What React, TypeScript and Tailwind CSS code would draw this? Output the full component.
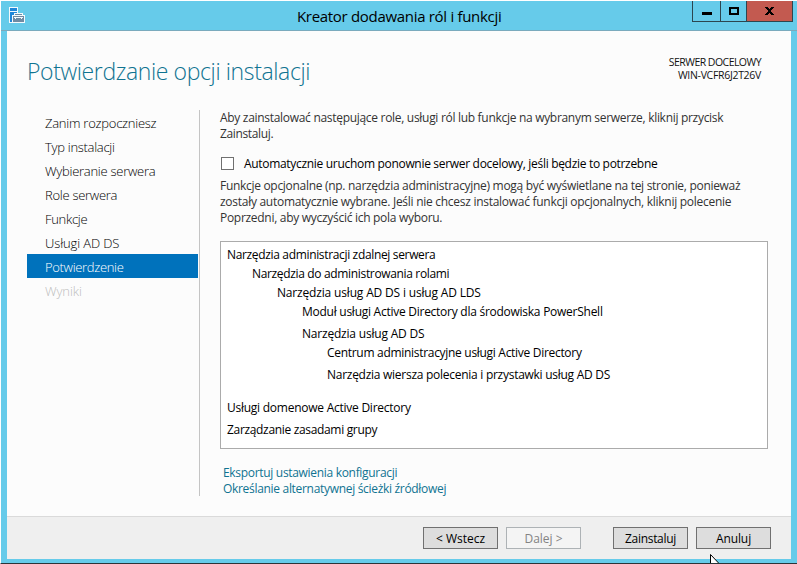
import React from "react";

const steps = [
  { label: "Zanim rozpoczniesz", tracking: "tracking-[-0.25px]" },
  { label: "Typ instalacji", tracking: "tracking-[-0.29px]" },
  { label: "Wybieranie serwera", tracking: "tracking-[-0.27px]" },
  { label: "Role serwera", tracking: "tracking-[-0.28px]" },
  { label: "Funkcje", tracking: "tracking-[-0.3px]" },
  { label: "Usługi AD DS", tracking: "tracking-[-0.12px]" },
  { label: "Potwierdzenie", tracking: "tracking-[-0.33px]" },
  { label: "Wyniki", tracking: "tracking-[-0.1px]" },
];

const features = [
  { label: "Narzędzia administracji zdalnej serwera", style: "pl-0 h-[19px] tracking-[-0.34px]" },
  { label: "Narzędzia do administrowania rolami", style: "pl-[25px] h-[19px] tracking-[-0.34px]" },
  { label: "Narzędzia usług AD DS i usług AD LDS", style: "pl-[50px] h-[19px] tracking-[-0.17px]" },
  { label: "Moduł usługi Active Directory dla środowiska PowerShell", style: "pl-[75px] h-[22px] tracking-[-0.26px]" },
  { label: "Narzędzia usług AD DS", style: "pl-[75px] h-[19px] tracking-[-0.2px]" },
  { label: "Centrum administracyjne usługi Active Directory", style: "pl-[100px] h-[22px] tracking-[-0.3px]" },
  { label: "Narzędzia wiersza polecenia i przystawki usług AD DS", style: "pl-[100px] h-[33px] tracking-[-0.27px]" },
  { label: "Usługi domenowe Active Directory", style: "pl-0 h-[22px] tracking-[-0.25px]" },
  { label: "Zarządzanie zasadami grupy", style: "pl-0 h-[19px] tracking-[-0.33px]" },
];

function ServerIcon() {
  return (
    <svg width="17" height="17" viewBox="0 0 17 17" shapeRendering="crispEdges">
      <path d="M0 0h9v6h5v2h2v8H0z" fill="#f4fafd" />
      <path d="M1 1h7v3H1zM1 5h7v1H5v2H3v7H1z" fill="#1f86d8" />
      <path d="M4 9h11v6H4z" fill="#6f8ba3" />
      <path d="M6 7h7v1h-7z" fill="#6f8ba3" />
      <path d="M5 10h9v1H5z" fill="#f4fafd" />
      <path d="M6 11h1v1H6zM12 11h1v1h-1z" fill="#f4fafd" />
    </svg>
  );
}

function TitleBar() {
  return (
    <header className="relative flex h-[30px] shrink-0 justify-between border-b border-[#7aaabd]">
      <div className="pt-1.5 pl-2">
        <ServerIcon />
      </div>
      <h1 className="absolute top-[5px] left-[296px] text-[15px] leading-5 tracking-[-0.31px] whitespace-nowrap text-black">
        Kreator dodawania ról i funkcji
      </h1>
      <div className="mr-1 flex h-[21px] border border-t-0 border-[#2c4650]">
        <button className="flex w-7 items-center justify-center border-r border-[#2c4650]">
          <span className="mt-1 h-[3px] w-2.5 bg-black" />
        </button>
        <button className="flex w-[26px] items-center justify-center border-r border-[#2c4650]">
          <span className="h-2 w-2.5 border-2 border-black" />
        </button>
        <button className="flex w-[45px] items-center justify-center bg-[#c35a50]">
          <svg width="9" height="8" viewBox="0 0 9 8" shapeRendering="crispEdges">
            <path d="M0 0h3v1h1v1h1V1h1V0h3v1H8v1H7v1H6v2h1v1h1v1h1v1H6V7H5V6H4v1H3v1H0V7h1V6h1V5h1V3H2V2H1V1H0z" fill="#000" />
          </svg>
        </button>
      </div>
    </header>
  );
}

function WizardButton({ children, disabled, className = "" }: { children: string; disabled?: boolean; className?: string }) {
  return (
    <button
      disabled={disabled}
      className={`h-[22px] w-[75px] border text-center text-xs leading-[21px] ${
        disabled ? "border-[#adb2b5] bg-[#f4f4f4] text-[#838383]" : "border-[#707070] bg-[#dddddd] text-black"
      } ${className}`}
    >
      {children}
    </button>
  );
}

export default function App() {
  return (
    <div className="relative flex h-[564px] w-[797px] flex-col overflow-hidden border-t border-b border-l border-t-white border-b-[#2b3438] border-l-white bg-[#66cbea] font-['Open_Sans','Noto_Sans',sans-serif] text-xs text-black">
      <TitleBar />
      <main className="mr-1.5 ml-1.5 flex h-[528px] flex-col bg-[#fcfcfc]">
        <div className="flex h-[79px] justify-between pr-[30px] pl-5">
          <h2 className="pt-6 text-[23px] leading-8 font-light tracking-[-0.38px] whitespace-nowrap text-[#0f7391]">
            Potwierdzanie opcji instalacji
          </h2>
          <div className="pt-[25px] text-right text-[10.5px] leading-[13px] text-[#111]">
            <p className="tracking-[-0.54px]">SERWER DOCELOWY</p>
            <p className="tracking-[-0.3px]">WIN-VCFR6J2T26V</p>
          </div>
        </div>
        <div className="flex h-[406px] pl-5">
          <nav className="h-[386px] w-[173px] border-r border-[#c4c4c4] text-[13px] font-light text-black">
            {steps.map((s, i) => (
              <div
                key={s.label}
                className={`h-6 w-[171px] pt-0.5 pl-[18px] leading-[22px] whitespace-nowrap ${s.tracking} ${
                  i === 6 ? "bg-[#0072bc] text-white" : i === 7 ? "text-[#bcbcbc]" : ""
                }`}
              >
                {s.label}
              </div>
            ))}
          </nav>
          <section className="flex flex-col pl-5 whitespace-nowrap">
            <div className="leading-4 tracking-[-0.3px] text-[#333]">
              <p>Aby zainstalować następujące role, usługi ról lub funkcje na wybranym serwerze, kliknij przycisk</p>
              <p className="tracking-[-0.36px]">Zainstaluj.</p>
            </div>
            <label className="mt-[15px] flex h-[21px] items-start pl-px">
              <span className="h-[13px] w-[13px] border border-[#707070] bg-white" />
              <span className="-mt-px pl-2.5 leading-4 tracking-[-0.31px]">
                Automatycznie uruchom ponownie serwer docelowy, jeśli będzie to potrzebne
              </span>
            </label>
            <div className="leading-4 text-[#333]">
              <p className="tracking-[-0.3px]">Funkcje opcjonalne (np. narzędzia administracyjne) mogą być wyświetlane na tej stronie, ponieważ</p>
              <p className="tracking-[-0.275px]">zostały automatycznie wybrane. Jeśli nie chcesz instalować funkcji opcjonalnych, kliknij polecenie</p>
              <p className="tracking-[-0.29px]">Poprzedni, aby wyczyścić ich pola wyboru.</p>
            </div>
            <ul className="mt-[15px] h-[208px] w-[548px] border border-[#ababab] bg-white pt-[5px] pl-1.5 leading-4">
              {features.map((f) => (
                <li key={f.label} className={f.style}>{f.label}</li>
              ))}
            </ul>
            <div className="mt-4 flex flex-col pl-[3px] leading-4 tracking-[-0.31px] text-[#0f7391]">
              <a>Eksportuj ustawienia konfiguracji</a>
              <a>Określanie alternatywnej ścieżki źródłowej</a>
            </div>
          </section>
        </div>
        <footer className="flex h-[43px] justify-end border-t border-[#dadada] bg-[#efefef] pt-2.5 pr-5">
          <WizardButton>{"< Wstecz"}</WizardButton>
          <WizardButton disabled className="ml-2">{"Dalej >"}</WizardButton>
          <WizardButton className="ml-8 tracking-[-0.3px]">Zainstaluj</WizardButton>
          <WizardButton className="ml-2 tracking-[-0.1px]">Anuluj</WizardButton>
        </footer>
      </main>
      <svg className="absolute top-[553px] left-[709px]" width="12" height="10" viewBox="0 0 12 10">
        <path d="M0.5 0.5V10H9.5z" fill="#fff" stroke="#000" />
      </svg>
    </div>
  );
}
